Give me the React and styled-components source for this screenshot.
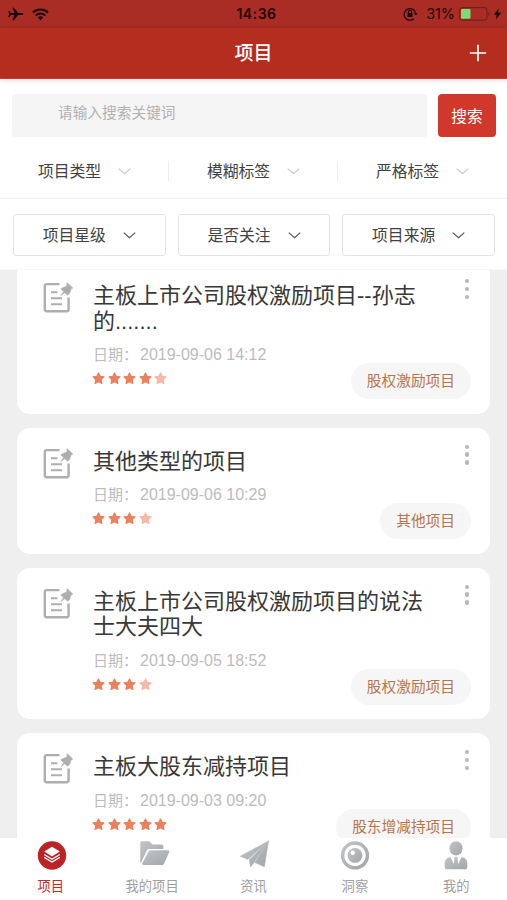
import React from 'react';
import styled, { createGlobalStyle } from 'styled-components';

const GlobalStyle = createGlobalStyle`
  * { box-sizing: border-box; }
  body { margin: 0; background: #fff; }
  button { font: inherit; border: 0; padding: 0; background: none; }
`;

const Screen = styled.div`
  width: 507px;
  height: 900px;
  display: flex;
  flex-direction: column;
  overflow: hidden;
  background: #fff;
  color: #3c3c3c;
  font-family: "Liberation Sans", "Noto Sans CJK SC", sans-serif;
`;

const StatusBar = styled.div`
  height: 28px;
  flex: none;
  display: grid;
  grid-template-columns: 1fr auto 1fr;
  align-items: center;
  padding: 0 5px 0 8px;
  background: #a92c25;
  color: #1c0908;
  font: 500 14px/28px Inter, sans-serif;
`;

const StatusGroup = styled.div`
  display: flex;
  align-items: center;
  justify-content: ${(p) => (p.$end ? 'flex-end' : 'flex-start')};
`;

const Clock = styled.div`
  padding-left: 3px;
  font-weight: 600;
  letter-spacing: 0.5px;
`;

const Percent = styled.span`
  margin: 0 4px 0 8px;
  font-weight: 400;
  font-size: 14.4px;
`;

const Header = styled.header`
  height: 51px;
  flex: none;
  display: grid;
  grid-template-columns: 1fr auto 1fr;
  align-items: center;
  padding: 0 20px;
  background: #b52d1f;
  border-bottom: 1px solid #c8392c;
  box-shadow: 0 1px 6px rgba(0, 0, 0, 0.14);
  color: #fff;
`;

const HeaderTitle = styled.h1`
  grid-column: 2;
  margin: 0;
  padding-top: 2px;
  font-size: 19px;
  line-height: 28px;
  font-weight: 500;
`;

const AddButton = styled.button`
  justify-self: end;
  display: flex;
  color: #fff;
`;

const SearchRow = styled.div`
  height: 58px;
  flex: none;
  display: flex;
  gap: 11px;
  padding: 15px 11px 0 12px;
`;

const SearchField = styled.div`
  flex: 1;
  height: 43px;
  padding-left: 46px;
  border-radius: 3px;
  background: #f5f5f5;
  color: #b1b1b1;
  font-size: 14.7px;
  line-height: 38px;
`;

const SearchButton = styled.button`
  width: 58px;
  height: 43px;
  border-radius: 4px;
  background: #cf382a;
  color: #fff;
  && { font-size: 15.7px; line-height: 45px; }
`;

const TabFilters = styled.div`
  height: 62px;
  flex: none;
  display: grid;
  grid-template-columns: repeat(3, 1fr);
  align-items: center;
  padding-top: 7px;
  border-bottom: 1px solid #f0f0f0;
`;

const FilterLabel = styled.button`
  height: 21px;
  display: flex;
  align-items: center;
  justify-content: center;
  gap: 17px;
  padding-left: 1px;
  border-right: 1px solid ${(p) => (p.$last ? 'transparent' : '#eeeeee')};
  color: #424242;
  && { font-size: 15.8px; line-height: 22px; }
`;

const FilterText = styled.span`
  padding-top: 2px;
`;

const BoxFilters = styled.div`
  height: 71px;
  flex: none;
  display: grid;
  grid-template-columns: repeat(3, 1fr);
  gap: 12px;
  padding: 15px 12px 14px 13px;
  border-bottom: 1px solid #f7f7f7;
`;

const BoxFilter = styled(FilterLabel)`
  height: 42px;
  padding-left: 0;
  border: 1px solid #e3e3e3;
  border-radius: 3px;
`;

const List = styled.main`
  flex: 1;
  min-height: 0;
  overflow: hidden;
  display: flex;
  flex-direction: column;
  gap: 14px;
  padding: 0 17px;
  background: #efefef;
`;

const Card = styled.article`
  flex: none;
  display: grid;
  grid-template-columns: 50px 1fr;
  padding: 21px 19px 0 26px;
  height: ${(p) => (p.$tall ? 151.5 : 126)}px;
  margin-top: ${(p) => (p.$scrolled ? -8 : 0)}px;
  border-radius: 13px;
  background: #fff;
`;

const CardIcon = styled.div`
  margin: -2px 0 0 -0.6px;
`;

const CardBody = styled.div`
  display: flex;
  flex-direction: column;
  min-width: 0;
`;

const TitleRow = styled.div`
  display: flex;
  justify-content: space-between;
  align-items: flex-start;
`;

const CardTitle = styled.h2`
  width: 332px;
  margin: 0;
  color: #383838;
  font-size: 22px;
  line-height: 25.7px;
  font-weight: 400;
  white-space: pre-line;
`;

const MoreButton = styled.button`
  width: 8px;
  display: flex;
  flex-direction: column;
  align-items: center;
  gap: 3.8px;
  margin-top: -4px;
`;

const Dot = styled.i`
  width: 4.2px;
  height: 4.2px;
  border-radius: 50%;
  background: #b7b7b7;
`;

const DateLine = styled.div`
  display: flex;
  margin-top: 9.8px;
  color: #bcbcbc;
  font-size: 16px;
  line-height: 22px;
`;

const DateLabel = styled.span`
  width: 47px;
  font-size: 15px;
`;

const MetaRow = styled.div`
  height: 36px;
  display: flex;
  justify-content: space-between;
  margin-top: -3px;
`;

const Stars = styled.div`
  display: flex;
  gap: 2.5px;
  margin-left: -0.7px;
  padding-top: 9px;
`;

const Tag = styled.span`
  height: 36px;
  padding: 0 16px;
  border-radius: 18px;
  background: #f6f6f6;
  color: #b5754f;
  font-size: 14.7px;
  line-height: 36px;
`;

const TabBar = styled.nav`
  height: 62px;
  flex: none;
  display: grid;
  grid-template-columns: repeat(5, 1fr);
  background: #fff;
`;

const TabItem = styled.button`
  display: flex;
  flex-direction: column;
  align-items: center;
  padding-top: 2px;
  color: ${(p) => (p.$active ? '#c22a2b' : '#a0a0a0')};
  && { font-size: 13.3px; line-height: 21px; }
`;

const TabIcon = styled.svg`
  width: 32px;
  height: 32px;
  margin-bottom: 4px;
  overflow: visible;
`;

const PlaneIcon = () => (
  <svg width="16" height="14" viewBox="0 0 16 14" fill="currentColor">
    <path d="M15.4 7c0-.7-.8-1.1-1.8-1.1h-3.4L5.8.7H4.3l2.1 5.2H3L1.5 4H.4l.8 3-.8 3h1.1L3 8.1h3.4l-2.1 5.2h1.5l4.4-5.2h3.4c1 0 1.8-.4 1.8-1.1z" />
  </svg>
);

const WifiSvg = styled.svg`
  margin-left: 8px;
`;

const WifiIcon = () => (
  <WifiSvg width="17" height="13" viewBox="0 0 17 13" fill="none" stroke="currentColor" strokeWidth="2.1">
    <path d="M1 4.6a10.8 10.8 0 0 1 15 0M3.7 7.4a6.9 6.9 0 0 1 9.6 0" />
    <path d="M8.5 12.2 5.9 9.5a3.8 3.8 0 0 1 5.2 0z" fill="currentColor" stroke="none" />
  </WifiSvg>
);

const LockIcon = () => (
  <svg width="15" height="14" viewBox="0 0 15 14" fill="none" stroke="currentColor" strokeWidth="1.2">
    <path d="M10.8 11.8A5.8 5.8 0 1 1 12.8 7" />
    <path d="m10.8 6.2 2 2.2 1.7-2.2z" fill="currentColor" stroke="none" />
    <path d="M5.4 6.4V5a1.6 1.6 0 0 1 3.2 0v1.4" />
    <rect x="4.5" y="6.1" width="5" height="3.9" rx=".6" fill="currentColor" stroke="none" />
  </svg>
);

const BatterySvg = styled.svg`
  margin-right: 1px;
`;

const BatteryIcon = () => (
  <BatterySvg width="33" height="14" viewBox="0 0 33 14">
    <rect x=".6" y=".6" width="27.4" height="12.6" rx="2.5" fill="none" stroke="#68201b" strokeWidth="1" />
    <rect x="2" y="2" width="9.5" height="9.8" rx="1" fill="#7bdd76" />
    <path d="M29.5 4.8c1.5.7 1.5 3.5 0 4.2z" fill="#68201b" />
  </BatterySvg>
);

const BoltIcon = () => (
  <svg width="9" height="12" viewBox="0 0 9 12" fill="currentColor">
    <path d="M5.8.4.8 6.7h3L2.8 11.6l5.5-6.8H5.1z" />
  </svg>
);

const PlusIcon = () => (
  <svg width="18" height="18" viewBox="0 0 18 18" fill="none" stroke="currentColor" strokeWidth="1.7">
    <path d="M9 .8v16.4M.8 9h16.4" />
  </svg>
);

const Chevron = ({ color }) => (
  <svg width="13" height="8" viewBox="0 0 13 8" fill="none" stroke={color} strokeWidth="1.2">
    <path d="m.7 1.6 5.8 5.2 5.8-5.2" />
  </svg>
);

const NoteIcon = () => (
  <svg width="32" height="32" viewBox="0 0 32 32" fill="none" stroke="#b0aeac" strokeWidth="2.4">
    <path d="M17.5 3.1H4.6a1.8 1.8 0 0 0-1.8 1.8v23.6a1.8 1.8 0 0 0 1.8 1.8h20.2a1.8 1.8 0 0 0 1.8-1.8V16.5" />
    <path d="M9 11.2h6.5M9 17.2h11M9 23.2h11" strokeWidth="2.1" />
    <path d="m25 1.6 5.8 5.4-1.8 1.1-1.2 4-2 2.2-3.1-2.6-3.7 2.9 2.6-3.9-2.8-2.9 2.4-1.4 3.7-1.4z" fill="#b0aeac" stroke="#b0aeac" strokeWidth=".6" strokeLinejoin="round" />
  </svg>
);

const Star = ({ faded }) => (
  <svg width="13" height="13" viewBox="0 0 13 13">
    <path
      d="m6.5 1 1.7 3.3 3.8.6-2.8 2.6.7 3.9-3.4-1.8-3.4 1.8.7-3.9L1 4.9l3.8-.6z"
      fill={faded ? '#f4b9a9' : '#eb805f'}
      stroke={faded ? '#f4b9a9' : '#eb805f'}
      strokeWidth="1.2"
      strokeLinejoin="round"
    />
  </svg>
);

const Gray = ({ id }) => (
  <linearGradient id={id} x1="0" y1="0" x2="1" y2="1">
    <stop stopColor="#c2c5c7" />
    <stop offset="1" stopColor="#a2a6a8" />
  </linearGradient>
);

const ProjectsIcon = () => (
  <TabIcon viewBox="0 0 32 32">
    <circle cx="17" cy="15.5" r="14.2" fill="#bd2224" />
    <path d="m17 6.8 7.8 4.8-7.8 4.8-7.8-4.8z" fill="#fff" />
    <path d="m9.2 14.5 7.8 4.7 7.8-4.7M9.2 17.4l7.8 4.7 7.8-4.7" fill="none" stroke="#fff" strokeWidth="1.3" />
  </TabIcon>
);

const FolderIcon = () => (
  <TabIcon viewBox="0 0 32 32">
    <Gray id="folder" />
    <path d="M6 1.2h7.2l3.4 3.4h9a1.7 1.7 0 0 1 1.7 1.7v2.7H13.8c-1.5 0-2.5.6-3.1 1.8L5.2 22.6H4.3V2.9A1.6 1.6 0 0 1 6 1.2z" fill="url(#folder)" />
    <path d="M15 10.2h16.8c1.4 0 2 .8 1.4 2L28.3 23c-.5 1.5-1.1 2-2.3 2H7.4c-1.2 0-1.6-.8-1-1.9l6-11.3c.6-1.2 1.3-1.6 2.6-1.6z" fill="url(#folder)" />
  </TabIcon>
);

const SendIcon = () => (
  <TabIcon viewBox="0 0 32 32">
    <Gray id="send" />
    <path d="M31.5 1 3.2 16.2l7.6 3.2zM31.5 1 12.2 19.8l1.3 7.1 3.2-4zM31.5 1l-4.1 25.8-9.6-4.2z" fill="url(#send)" stroke="url(#send)" strokeWidth=".5" strokeLinejoin="round" />
  </TabIcon>
);

const InsightIcon = () => (
  <TabIcon viewBox="0 0 32 32">
    <Gray id="insight" />
    <circle cx="16" cy="15.4" r="12.4" fill="none" stroke="url(#insight)" strokeWidth="3.5" />
    <circle cx="16" cy="15.4" r="7.4" fill="url(#insight)" />
    <circle cx="13.7" cy="12.8" r="2.2" fill="#fff" />
  </TabIcon>
);

const ProfileIcon = () => (
  <TabIcon viewBox="0 0 32 32">
    <Gray id="profile" />
    <ellipse cx="16" cy="8.4" rx="6.5" ry="7.2" fill="url(#profile)" />
    <path d="m10.3 16.9 3.5 7.2.8-5.4-.8-1.4h4.4l-.8 1.4.8 5.4 3.5-7.2c3.7.8 5.6 2.8 5.6 6.2v3.6c0 1.8-.8 2.6-2.6 2.6H7.3c-1.8 0-2.6-.8-2.6-2.6v-3.6c0-3.4 1.9-5.4 5.6-6.2z" fill="url(#profile)" />
  </TabIcon>
);

const projects = [
  { title: '主板上市公司股权激励项目--孙志\n的.......', date: '2019-09-06 14:12', stars: 4, faded: 1, tag: '股权激励项目', tall: true },
  { title: '其他类型的项目', date: '2019-09-06 10:29', stars: 3, faded: 1, tag: '其他项目' },
  { title: '主板上市公司股权激励项目的说法\n士大夫四大', date: '2019-09-05 18:52', stars: 3, faded: 1, tag: '股权激励项目', tall: true },
  { title: '主板大股东减持项目', date: '2019-09-03 09:20', stars: 5, faded: 0, tag: '股东增减持项目' },
];

const tabs = [
  { label: '项目', Icon: ProjectsIcon },
  { label: '我的项目', Icon: FolderIcon },
  { label: '资讯', Icon: SendIcon },
  { label: '洞察', Icon: InsightIcon },
  { label: '我的', Icon: ProfileIcon },
];

const ProjectCard = ({ item, scrolled }) => (
  <Card $tall={item.tall} $scrolled={scrolled}>
    <CardIcon><NoteIcon /></CardIcon>
    <CardBody>
      <TitleRow>
        <CardTitle>{item.title}</CardTitle>
        <MoreButton><Dot /><Dot /><Dot /></MoreButton>
      </TitleRow>
      <DateLine><DateLabel>日期：</DateLabel>{item.date}</DateLine>
      <MetaRow>
        <Stars>
          {Array.from({ length: item.stars + item.faded }, (_, i) => (
            <Star key={i} faded={i >= item.stars} />
          ))}
        </Stars>
        <Tag>{item.tag}</Tag>
      </MetaRow>
    </CardBody>
  </Card>
);

export default function App() {
  return (
    <Screen>
      <GlobalStyle />
      <StatusBar>
        <StatusGroup><PlaneIcon /><WifiIcon /></StatusGroup>
        <Clock>14:36</Clock>
        <StatusGroup $end>
          <LockIcon /><Percent>31%</Percent><BatteryIcon /><BoltIcon />
        </StatusGroup>
      </StatusBar>
      <Header>
        <HeaderTitle>项目</HeaderTitle>
        <AddButton><PlusIcon /></AddButton>
      </Header>
      <SearchRow>
        <SearchField>请输入搜索关键词</SearchField>
        <SearchButton>搜索</SearchButton>
      </SearchRow>
      <TabFilters>
        {['项目类型', '模糊标签', '严格标签'].map((label, i) => (
          <FilterLabel key={label} $last={i === 2}>
            <FilterText>{label}</FilterText><Chevron color="#c9c9c9" />
          </FilterLabel>
        ))}
      </TabFilters>
      <BoxFilters>
        {['项目星级', '是否关注', '项目来源'].map((label) => (
          <BoxFilter key={label}>
            <FilterText>{label}</FilterText><Chevron color="#555555" />
          </BoxFilter>
        ))}
      </BoxFilters>
      <List>
        {projects.map((item, i) => (
          <ProjectCard key={item.title} item={item} scrolled={i === 0} />
        ))}
      </List>
      <TabBar>
        {tabs.map(({ label, Icon }, i) => (
          <TabItem key={label} $active={i === 0}><Icon />{label}</TabItem>
        ))}
      </TabBar>
    </Screen>
  );
}
